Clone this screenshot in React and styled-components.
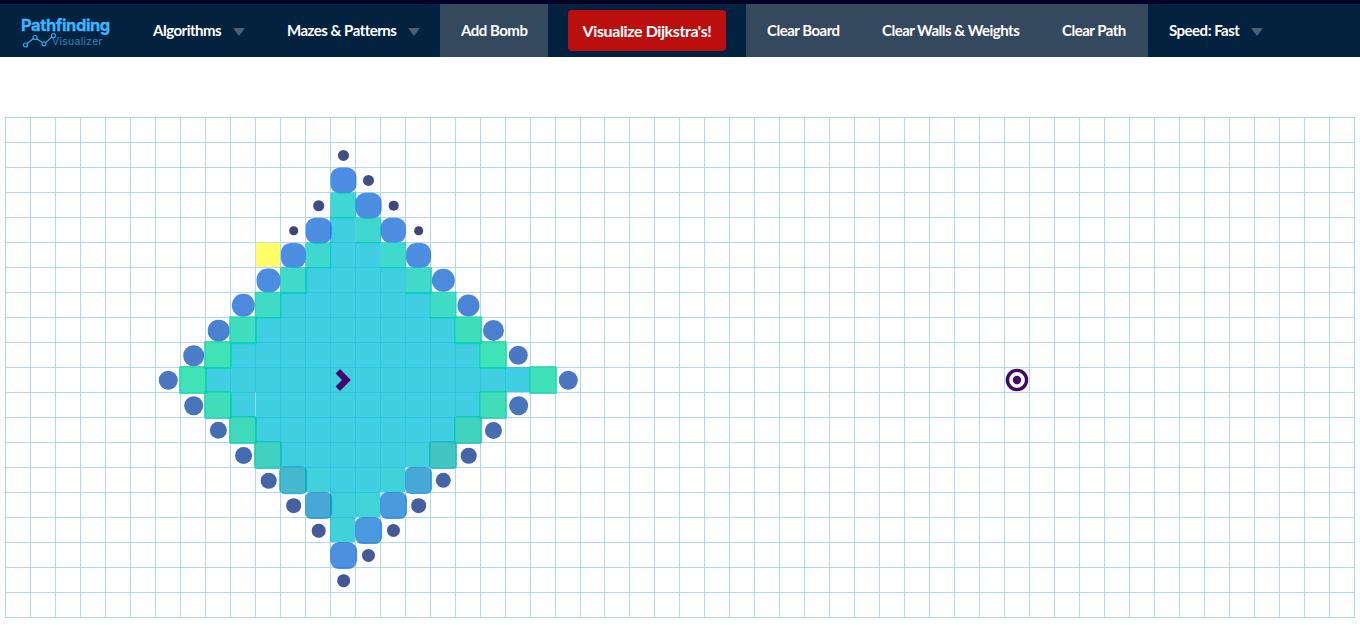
import React from 'react';
import styled, { createGlobalStyle, css } from 'styled-components';

const GlobalStyle = createGlobalStyle`
  body { margin: 0; background: #fff; font-family: Lato, "Open Sans", sans-serif; overflow: hidden; }
  * { box-sizing: border-box; }
`;

const NavBar = styled.header`
  display: flex;
  height: 57px;
  border-top: 4px solid #000026;
  background: #03223f;
  color: #fff;
`;

const Brand = styled.div`
  width: 132px;
  padding: 13px 0 0 21px;
`;

const BrandName = styled.div`
  font: 700 16.5px/16px Inter, sans-serif;
  letter-spacing: -0.42px;
  color: #38b6ff;
  -webkit-text-stroke: 0.3px #38b6ff;
  white-space: nowrap;
`;

const BrandSub = styled.div`
  display: flex;
  align-items: flex-start;
  margin-top: 4px;
  font: 400 10.5px/10px Inter, sans-serif;
  letter-spacing: 0.25px;
  color: #3182b8;
`;

const Spark = styled.svg`
  flex: none;
  width: 36px;
  height: 16px;
  margin: -5px -5px 0 0;
`;

const NavItem = styled.div`
  display: flex;
  align-items: center;
  width: ${(p) => p.$width}px;
  height: 53px;
  padding: 0 0 1px 21px;
  background: ${(p) => (p.$raised ? '#35495e' : 'transparent')};
  font-size: 15px;
  font-weight: 700;
  letter-spacing: -0.5px;
  white-space: nowrap;
`;

const Caret = styled.span`
  margin: 3px 0 0 12px;
  border: 6px solid transparent;
  border-top: 8px solid #4b6075;
  border-bottom: 0;
`;

const ActionSlot = styled.div`
  width: 198px;
  padding: 6px 20px;
`;

const ActionButton = styled.button`
  width: 158px;
  height: 41px;
  padding: 0 0 1px;
  border: 0;
  border-radius: 4px;
  background: #bb0f0f;
  color: #fff;
  font: 700 16px Lato, sans-serif;
  letter-spacing: -0.4px;
  white-space: nowrap;
`;

const Board = styled.main`
  display: grid;
  grid-template-columns: repeat(23, 25px) 24px repeat(30, 25px);
  grid-auto-rows: 25px;
  width: 1350px;
  margin: 60px 0 0 5px;
  border-right: 1px solid #afd8f8;
  border-bottom: 1px solid #afd8f8;
`;

const Cell = styled.div`
  position: relative;
  border: 0 solid #afd8f8;
  border-width: 1px 0 0 1px;
  ${(p) => p.$fill && css`
    background: ${p.$fill};
    border-color: ${p.$line};
  `}
  ${(p) => p.$fresh && css`
    border-left-color: #8edcf0;
  `}
`;

const Mark = styled.i`
  position: absolute;
  z-index: 1;
  left: 12px;
  top: 12px;
  width: ${(p) => p.$size}px;
  height: ${(p) => p.$size}px;
  border-radius: ${(p) => p.$radius}px;
  background: ${(p) => p.$color};
  transform: translate(calc(-50% + ${(p) => p.$nudge}px), calc(-50% + ${(p) => p.$nudge}px));
`;

const Glyph = styled.svg`
  position: absolute;
  z-index: 2;
  left: -1px;
  top: -1px;
  width: 26px;
  height: 26px;
`;

const COLUMNS = 54;
const ROWS = 20;
const VISITED = {
  4: [13, 13], 5: [13, 14], 6: [12, 15], 7: [11, 16], 8: [10, 17], 9: [9, 18], 10: [8, 20],
  11: [9, 18], 12: [10, 17], 13: [11, 16], 14: [12, 15], 15: [13, 14], 16: [13, 13],
};
const TINTS = {
  '13,16': '#40d2d9', '14,15': '#40d3d7', '13,15': '#40d1dc', '15,14': '#40d2d9',
  '12,14': '#40d1dd', '16,13': '#40d1dc', '14,14': '#40cfe0',
};

// [column, row, diameter] of cells in the first half of the animation
const DOTS = [
  [13, 1, 11], [14, 2, 11], [12, 3, 10.5], [15, 3, 9.5], [11, 4, 8.5], [16, 4, 8.5],
  [13, 2, 26], [14, 3, 25.6], [12, 4, 25.5], [15, 4, 25.2], [11, 5, 25], [16, 5, 24.8],
  [10, 6, 23.8], [17, 6, 23.2], [9, 7, 23.2], [18, 7, 22], [8, 8, 21.5], [19, 8, 21],
  [7, 9, 20.5], [20, 9, 19.3], [6, 10, 19.3], [22, 10, 19.3], [7, 11, 18.6], [20, 11, 18.6],
  [8, 12, 17.2], [19, 12, 17], [9, 13, 16.8], [18, 13, 15.5], [10, 14, 15.5], [17, 14, 15.3],
  [11, 15, 14.6], [16, 15, 14.6], [12, 16, 13.5], [15, 16, 13], [14, 17, 13], [13, 18, 12.6],
];

// [column, row, size, radius, rgb] of cells in the second half
const TILES = [
  [13, 3, 26, 0, '0,200,196'], [14, 4, 26, 0, '0,201,190'], [12, 5, 26, 0, '0,202,190'],
  [15, 5, 26.2, 0, '0,204,190'], [11, 6, 26.5, 0, '0,204,184'], [16, 6, 26.5, 0, '0,204,184'],
  [10, 7, 27, 0, '0,207,176'], [17, 7, 27, 0, '0,207,176'], [9, 8, 28, 1, '0,211,169'],
  [18, 8, 28, 1, '0,212,166'], [8, 9, 28.3, 1.5, '0,216,160'], [19, 9, 28.3, 1.5, '0,216,160'],
  [7, 10, 28.3, 1.5, '0,216,160'], [21, 10, 28.3, 1.5, '0,214,160'], [8, 11, 28.3, 2, '0,209,162'],
  [19, 11, 28.3, 2, '0,209,160'], [9, 12, 28.3, 2.5, '0,204,163'], [18, 12, 28.3, 2.5, '0,198,168'],
  [10, 13, 28.3, 3.5, '2,193,172'], [17, 13, 28.3, 4, '4,178,176'], [11, 14, 28, 5.5, '8,160,188'],
  [16, 14, 26.5, 6, '10,138,200'], [12, 15, 26.5, 6, '10,138,199'], [15, 15, 26.5, 7.5, '13,119,211'],
  [14, 16, 26.5, 7.5, '13,119,211'], [13, 17, 26.5, 9, '15,108,214'],
];

const marks = {};
DOTS.forEach(([c, r, size]) => {
  const f = Math.max(0.06, Math.min(1, (size - 8) / 16));
  const mix = [17 * f, 104 * f, 66 + 151 * f].map(Math.round).join(',');
  marks[`${c},${r}`] = {
    $nudge: 0.45,
    $size: size,
    $radius: size > 23 ? Math.max(9.3, 11.5 - (size - 23)) : size / 2,
    $color: `rgba(${mix},.75)`,
  };
});
TILES.forEach(([c, r, size, radius, rgb]) => {
  marks[`${c},${r}`] = {
    $nudge: size < 27 ? 0.35 : 0.15, $size: size, $radius: radius, $color: `rgba(${rgb},.75)`,
  };
});

function fillOf(c, r) {
  if (c === 10 && r === 5) return '#ffff66';
  const span = VISITED[r];
  if (!span || c < span[0] || c > span[1]) return null;
  return TINTS[`${c},${r}`] || '#40cee3';
}

function BoardCell({ c, r }) {
  const mark = marks[`${c},${r}`];
  const yellow = c === 10 && r === 5;
  return (
    <Cell
      $fill={fillOf(c, r)}
      $line={yellow ? '#c5e2d8' : '#2cc5e2'}
      $fresh={c === 10 && r === 11}
    >
      {mark && <Mark {...mark} />}
      {c === 13 && r === 10 && (
        <Glyph viewBox="0 0 26 26">
          <path d="M10 2 L20.8 13 L10 24 L5.6 19.6 L12 13 L5.6 6.4Z" fill="#46066b" />
        </Glyph>
      )}
      {c === 40 && r === 10 && (
        <Glyph viewBox="0 0 26 26">
          <circle cx="13" cy="13" r="9.6" fill="#fff" stroke="#430867" strokeWidth="3.4" />
          <circle cx="13" cy="13" r="4.2" fill="#430867" />
        </Glyph>
      )}
    </Cell>
  );
}

const cells = Array.from({ length: COLUMNS * ROWS }, (_, i) => [i % COLUMNS, Math.floor(i / COLUMNS)]);

export default function App() {
  return (
    <>
      <GlobalStyle />
      <NavBar>
        <Brand>
          <BrandName>Pathfinding</BrandName>
          <BrandSub>
            <Spark viewBox="0 0 36 16" fill="none" stroke="#38a5e6" strokeWidth="1.2">
              <path d="M6 11.5 L12.4 6.8 M15.6 6.8 L21.3 10.6 M24.7 10.6 L31 5" />
              <circle cx="4.4" cy="13" r="2" />
              <circle cx="14" cy="5.5" r="2" />
              <circle cx="23" cy="11.8" r="2" />
              <circle cx="32.5" cy="3.7" r="2" />
            </Spark>
            Visualizer
          </BrandSub>
        </Brand>
        <NavItem $width={134}>Algorithms<Caret /></NavItem>
        <NavItem $width={174}>Mazes &amp; Patterns<Caret /></NavItem>
        <NavItem $width={108} $raised>Add Bomb</NavItem>
        <ActionSlot><ActionButton>Visualize Dijkstra's!</ActionButton></ActionSlot>
        <NavItem $width={115} $raised>Clear Board</NavItem>
        <NavItem $width={180} $raised>Clear Walls &amp; Weights</NavItem>
        <NavItem $width={107} $raised>Clear Path</NavItem>
        <NavItem $width={134}>Speed: Fast<Caret /></NavItem>
      </NavBar>
      <Board>
        {cells.map(([c, r]) => <BoardCell key={`${c},${r}`} c={c} r={r} />)}
      </Board>
    </>
  );
}
